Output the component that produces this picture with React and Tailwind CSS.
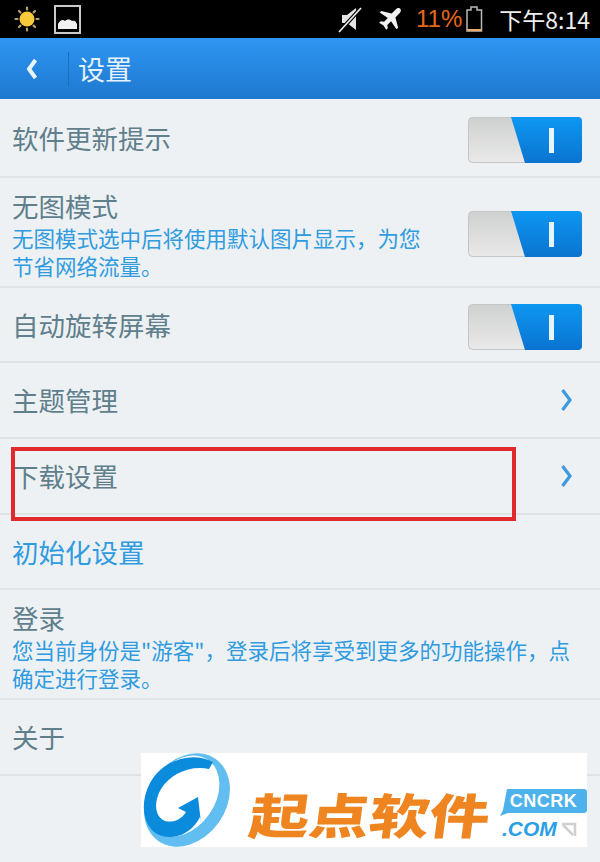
const cjk = { fontFamily: '"Noto Sans CJK SC", "Liberation Sans", sans-serif' };
const latin = { fontFamily: '"Liberation Sans", sans-serif' };

const Toggle = () => (
  <svg className="mt-[4px] shrink-0" width="114" height="46" viewBox="0 0 114 46">
    <defs>
      <linearGradient id="off" x1="0" y1="0" x2="0" y2="1">
        <stop offset="0" stopColor="#cfd0d0" />
        <stop offset="1" stopColor="#e9e9e9" />
      </linearGradient>
      <linearGradient id="on" x1="0" y1="0" x2="0" y2="1">
        <stop offset="0" stopColor="#0d97f2" />
        <stop offset="1" stopColor="#0a74d0" />
      </linearGradient>
    </defs>
    <rect x="0.5" y="0.5" width="113" height="45" rx="4" fill="url(#off)" stroke="#c4c6c6" />
    <path d="M43 0H110a4 4 0 0 1 4 4V42a4 4 0 0 1-4 4H57Z" fill="url(#on)" />
    <rect x="81" y="11" width="5" height="25" fill="#e6f4fd" />
  </svg>
);

const Chevron = () => (
  <svg className="mr-[8px] shrink-0" width="14" height="24" viewBox="0 0 14 24" fill="none">
    <path d="M2.500 2 10 12 2.500 22" stroke="#3d9ae0" strokeWidth="3.200" />
  </svg>
);

const Row = ({ title, desc, right, h, titleClass = "text-[#5f7f8c]", descWidth }) => (
  <div className={`flex items-center justify-between border-b-2 border-[#dfe3e4] pr-[18px] pl-3 ${h}`}>
    <div className={desc ? "min-w-0 pt-[5px]" : "min-w-0"}>
      <div className={`text-[26.5px] leading-[32px] ${titleClass}`}>{title}</div>
      {desc && <div className={`mt-[2px] text-[21.5px] leading-[28px] text-[#2f9be0] ${descWidth}`}>{desc}</div>}
    </div>
    {right}
  </div>
);

const StatusBar = () => (
  <div className="flex h-[38px] items-center bg-black pr-[10px] pl-[14px]">
    <svg width="26" height="26" viewBox="0 0 26 26">
      <circle cx="13" cy="13" r="7.500" fill="#f8c93a" />
      <g stroke="#b5a468" strokeWidth="2.200" strokeLinecap="round">
        <path d="M13 1.500v2M13 22.500v2M1.500 13h2M22.500 13h2M5 5l1.400 1.400M19.600 19.600 21 21M21 5l-1.400 1.400M6.400 19.600 5 21" />
      </g>
    </svg>
    <svg className="ml-[14px]" width="27" height="29" viewBox="0 0 27 29">
      <rect x="1" y="1" width="25" height="27" fill="#000" stroke="#c9c9c9" strokeWidth="2" />
      <path d="M4 24v-5c2-4 5-5 7-3 2-2 5-2 7 0 2-1 4 0 5 3v5Z" fill="#f2f2f2" />
    </svg>
    <svg className="ml-auto" width="26" height="28" viewBox="0 0 26 28" fill="none">
      <path d="M5 10h5l9-7v22l-9-7H5Z" fill="#e4e4e4" />
      <path d="M2 27 24 3" stroke="#000" strokeWidth="4" />
      <path d="M2 27 24 3" stroke="#e8e8e8" strokeWidth="1.800" />
    </svg>
    <svg className="ml-[14px]" width="26" height="26" viewBox="0 0 24 24">
      <path
        d="M21.500 2.500c-1-1-3-.6-4 .5L13.500 7 4 4.500 2.500 6l7.500 5-3.500 3.500-3-.5L2 15.500l4 2.500 2.500 4 1.500-1.500-.5-3L13 14l5 7.500 1.500-1.500L17 10.500l4-4c1-1 1.500-3 .5-4Z"
        fill="#f2f2f2"
      />
    </svg>
    <span className="ml-[13px] text-[24px] leading-none text-[#e8671c]" style={latin}>
      11%
    </span>
    <svg className="ml-[4px]" width="17" height="26" viewBox="0 0 17 26" fill="none">
      <path d="M1 4h4V1h6v3h4.500v21H1Z" stroke="#b9b9b9" strokeWidth="1.500" />
      <path d="M1 23h14.500v2H1Z" fill="#f0a868" />
    </svg>
    <span className="ml-[16px] text-[23px] leading-none text-[#eeeeee]" style={cjk}>
      下午8:14
    </span>
  </div>
);

const Watermark = () => (
  <div className="absolute top-[753px] left-[141px] flex h-[94px] w-[446px] items-start bg-white">
    <svg className="shrink-0" width="92" height="94" viewBox="0 0 92 94">
      <ellipse cx="46" cy="47" rx="39" ry="50" fill="#62bdf0" transform="rotate(35 46 47)" />
      <ellipse cx="42" cy="43" rx="32" ry="44" fill="#fff" transform="rotate(35 42 43)" />
      <path
        d="M72 9C52-2 22 6 9 30C-4 54 4 84 28 84C44 84 54 74 59 64L60 70L57 44L37 55L45 59C40 67 32 70 24 68C14 64 12 50 20 36C30 20 50 12 68 16Z"
        fill="#0b8bdc"
      />
    </svg>
    <span
      className="mt-[35px] ml-[17px] origin-left -skew-x-6 scale-x-[1.25] text-[48px] leading-[50px] font-black whitespace-nowrap text-[#ee8520]"
      style={cjk}
    >
      起点软件
    </span>
    <div className="absolute top-[36px] left-[357px] h-[46px] w-[89px]">
      <div className="relative ml-[2px] h-[24px] w-[87px] text-center text-[18px] leading-[24px] font-bold tracking-[0.5px] text-white" style={latin}>
        <svg className="absolute inset-0" width="87" height="27" viewBox="0 0 87 27">
          <path d="M7 0H84a3 3 0 0 1 3 3V21a3 3 0 0 1-3 3H8L0 27 3 21Z" fill="#4db1ec" />
        </svg>
        <span className="relative">CNCRK</span>
      </div>
      <div className="mt-[5px] ml-[4px] flex items-center">
        <span className="text-[21px] leading-[22px] font-bold text-[#2b9fe6] italic" style={latin}>
          .COM
        </span>
        <svg className="ml-[4px]" width="16" height="15" viewBox="0 0 16 15" fill="none">
          <path d="M1 2H14V14M2 3l10 10" stroke="#cfcfcf" strokeWidth="2.500" />
        </svg>
      </div>
    </div>
  </div>
);

export default function App() {
  return (
    <div className="relative h-[862px] w-[600px] overflow-hidden bg-[#eef1f3]" style={cjk}>
      <StatusBar />
      <div className="flex h-[61px] items-center bg-gradient-to-b from-[#2e96f2] to-[#1e78cf] pl-[26px]">
        <svg width="12" height="22" viewBox="0 0 12 22" fill="none">
          <path d="M9.500 2 3 11l6.500 9" stroke="#e9f4fd" strokeWidth="4" />
        </svg>
        <div className="ml-[30px] h-[34px] w-px bg-[#1c6fbd]" />
        <span className="ml-[9px] text-[27px] leading-none text-[#e6f2fc]">设置</span>
      </div>
      <Row h="h-[79px]" title="软件更新提示" right={<Toggle />} />
      <Row
        h="h-[110px]"
        title="无图模式"
        desc="无图模式选中后将使用默认图片显示，为您节省网络流量。"
        descWidth="w-[425px]"
        right={<Toggle />}
      />
      <Row h="h-[75px]" title="自动旋转屏幕" right={<Toggle />} />
      <Row h="h-[76px]" title="主题管理" right={<Chevron />} />
      <Row h="h-[76px]" title="下载设置" right={<Chevron />} />
      <Row h="h-[75px]" title="初始化设置" titleClass="text-[#2f9be0]" />
      <Row h="h-[110px]" title="登录" desc={'您当前身份是"游客"，登录后将享受到更多的功能操作，点确定进行登录。'} descWidth="w-[570px]" />
      <Row h="h-[76px]" title="关于" />
      <div className="pointer-events-none absolute top-[447px] left-[11px] h-[74px] w-[505px] border-[4px] border-[#e2292e]" />
      <Watermark />
    </div>
  );
}
